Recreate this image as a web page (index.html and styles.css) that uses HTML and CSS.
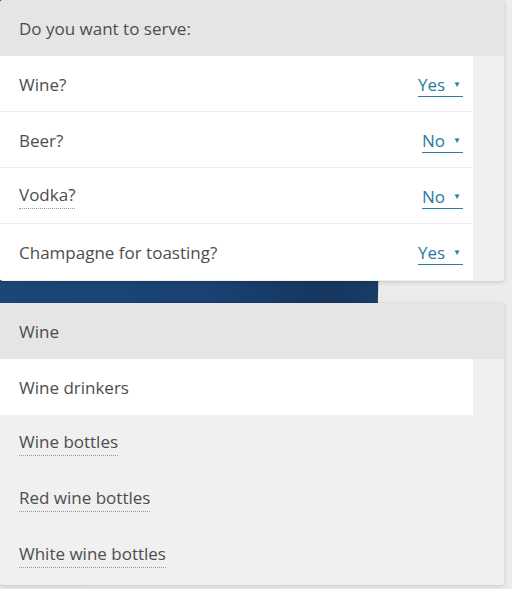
FILE: index.html
```html
<!DOCTYPE html>
<html>
<head>
<meta charset="utf-8">
<link rel="stylesheet" href="styles.css">
</head>
<body>
<div class="backdrop"></div>
<div class="page">
  <section class="card">
    <div class="card-head">Do you want to serve:</div>
    <div class="row white">
      <span class="label">Wine?</span>
      <a class="choice" href="#">Yes<span class="caret">▼</span></a>
    </div>
    <div class="row white">
      <span class="label">Beer?</span>
      <a class="choice" href="#">No<span class="caret">▼</span></a>
    </div>
    <div class="row white">
      <span class="label dotted">Vodka?</span>
      <a class="choice" href="#">No<span class="caret">▼</span></a>
    </div>
    <div class="row white last">
      <span class="label">Champagne for toasting?</span>
      <a class="choice" href="#">Yes<span class="caret">▼</span></a>
    </div>
  </section>
  <section class="card">
    <div class="card-head">Wine</div>
    <div class="row white last">
      <span class="label">Wine drinkers</span>
    </div>
    <div class="row plain">
      <span class="label dotted">Wine bottles</span>
    </div>
    <div class="row plain">
      <span class="label dotted">Red wine bottles</span>
    </div>
    <div class="row plain">
      <span class="label dotted">White wine bottles</span>
    </div>
  </section>
</div>
</body>
</html>
```
FILE: styles.css
```css
html, body {
  margin: 0;
  padding: 0;
}
body {
  width: 512px;
  height: 589px;
  overflow: hidden;
  background: linear-gradient(to right, #e9e9e9 0, #ececec 100%);
  font-family: "Open Sans", "Noto Sans", sans-serif;
  color: #4d4d4d;
  position: relative;
}
.backdrop {
  position: absolute;
  left: 0;
  top: 0;
  width: 384px;
  height: 303px;
  background: linear-gradient(to right, #1d4678 0%, #1a4172 55%, #16365e 85%, #1a3d69 100%);
  clip-path: polygon(0 0, 100% 0, 98.4% 100%, 0 100%);
}
.page {
  position: relative;
  width: 504px;
  display: flex;
  flex-direction: column;
  gap: 22px;
}
.card {
  background: #f0f0f0;
  border-radius: 3px;
  box-shadow: 0 1px 4px rgba(0, 0, 0, 0.16);
  overflow: hidden;
  padding-bottom: 1px;
}
.card + .card {
  padding-bottom: 2px;
}
.card-head {
  background: #e5e5e5;
  height: 56px;
  display: flex;
  align-items: center;
  padding-left: 19px;
  font-size: 17px;
  padding-top: 1px;
  box-sizing: border-box;
}
.row {
  height: 56px;
  display: flex;
  align-items: center;
  justify-content: space-between;
  padding: 1px 10px 0 19px;
  width: 473px;
  box-sizing: border-box;
  font-size: 17px;
}
.row.white {
  background: #fff;
  border-bottom: 1px solid #eeeeee;
}
.row.white.last {
  border-bottom: none;
}
.label.dotted {
  border-bottom: 1px dotted #999;
  line-height: 21px;
  padding-bottom: 3px;
}
.choice {
  display: inline-flex;
  align-items: center;
  color: #2b7ba1;
  text-decoration: none;
  line-height: 20px;
  padding-bottom: 1px;
  margin-top: 3px;
  border-bottom: 1px solid #2b7ba1;
}
.caret {
  font-size: 8px;
  margin-left: 8px;
  margin-right: 2px;
  position: relative;
  top: -1px;
}
```
